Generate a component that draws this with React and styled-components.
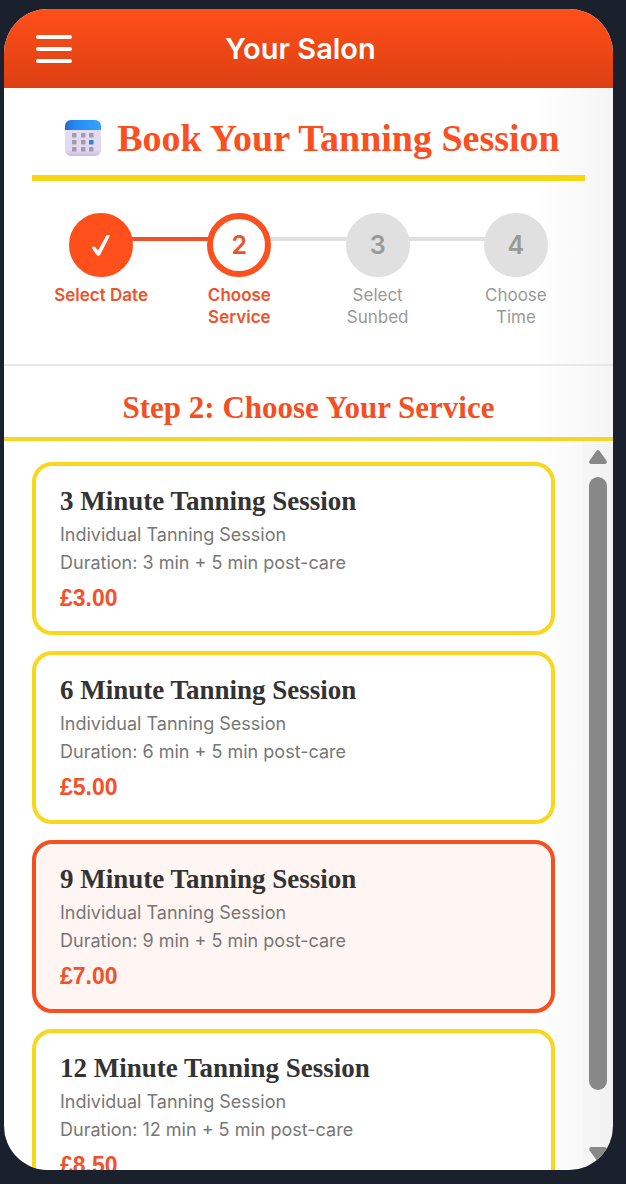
import React, { useState } from 'react'
import styled, { createGlobalStyle } from 'styled-components'

const GlobalStyle = createGlobalStyle`
    * {
        box-sizing: border-box;
    }
    body {
        margin: 0;
        background-color: #1a202c;
        font-family: Inter, 'Liberation Sans', sans-serif;
    }
    h1, h2, h3, p, ol {
        margin: 0;
        padding: 0;
    }
`

const Screen = styled.div`
    height: 100vh;
    padding: 9px 13px 14px 4px;
`

const Phone = styled.div`
    display: flex;
    flex-direction: column;
    height: 100%;
    overflow: hidden;
    border-radius: 44px;
    background: linear-gradient(to right, #ffffff 87%, #f5f5f5);
`

const Header = styled.header`
    display: flex;
    align-items: center;
    flex-shrink: 0;
    height: 79px;
    padding: 0 84px 0 32px;
    background: linear-gradient(#ff4f1a, #dd4012);
`

const MenuButton = styled.button`
    display: flex;
    flex-direction: column;
    gap: 8px;
    width: 36px;
    padding: 0;
    border: 0;
    background: none;
    cursor: pointer;
    > span {
        height: 4px;
        border-radius: 2px;
        background-color: #ffffff;
    }
`

const SalonName = styled.p`
    flex: 1;
    color: #ffffff;
    font-size: 29px;
    font-weight: 600;
    line-height: 36px;
    text-align: center;
`

const Booking = styled.section`
    flex-shrink: 0;
    padding: 28px 28px 36px;
    border-bottom: 2px solid #e8e8e8;
`

const TitleRow = styled.div`
    display: flex;
    align-items: center;
    justify-content: center;
    gap: 16px;
    padding: 0 0 15px 8px;
    border-bottom: 6px solid #fbd512;
    > svg {
        flex-shrink: 0;
    }
`

const Title = styled.h1`
    color: #fa4f1f;
    font-family: 'Liberation Serif', serif;
    font-size: 38px;
    font-weight: 700;
    line-height: 44px;
    white-space: nowrap;
`

const Steps = styled.ol`
    display: grid;
    grid-template-columns: repeat(4, 1fr);
    padding-top: 32px;
    list-style: none;
`

const Step = styled.li`
    position: relative;
    display: flex;
    flex-direction: column;
    align-items: center;
    gap: 7px;
    &:not(:last-child)::after {
        content: '';
        position: absolute;
        top: 24px;
        left: 50%;
        width: 100%;
        height: 4px;
        background-color: ${props => (props.$state === 'done' ? '#f0502a' : '#e0e0e0')};
    }
`

const circleColors = {
    done: { back: '#ff4f1a', edge: '#ff4f1a', text: '#ffffff' },
    current: { back: '#ffffff', edge: '#fc501f', text: '#ee5227' },
    next: { back: '#e0e0e0', edge: '#e0e0e0', text: '#999999' },
}

const Circle = styled.span`
    position: relative;
    z-index: 1;
    display: flex;
    align-items: center;
    justify-content: center;
    width: 64px;
    height: 64px;
    border: 6px solid ${props => circleColors[props.$state].edge};
    border-radius: 50%;
    background-color: ${props => circleColors[props.$state].back};
    color: ${props => circleColors[props.$state].text};
    font-size: 25px;
    font-weight: 600;
`

const StepLabel = styled.span`
    max-width: 100px;
    color: ${props => (props.$state === 'next' ? '#999999' : '#f0522a')};
    font-size: 17px;
    font-weight: ${props => (props.$state === 'next' ? 400 : 600)};
    line-height: 22px;
    text-align: center;
`

const StepHeading = styled.h2`
    flex-shrink: 0;
    padding: 24px 28px 11px;
    border-bottom: 4px solid #f6d524;
    color: #f44f22;
    font-family: 'Liberation Serif', serif;
    font-size: 31px;
    font-weight: 700;
    line-height: 36px;
    text-align: center;
`

const ListArea = styled.div`
    display: flex;
    flex: 1;
    min-height: 0;
`

const ServiceList = styled.div`
    display: flex;
    flex: 1;
    flex-direction: column;
    gap: 16px;
    padding: 21px 28px;
    overflow-y: auto;
    scrollbar-width: none;
`

const ServiceCard = styled.button`
    flex-shrink: 0;
    padding: 20px 24px 19px;
    border: 4px solid ${props => (props.$selected ? '#f6501f' : '#f9d71c')};
    border-radius: 20px;
    background-color: ${props => (props.$selected ? '#fff5f2' : '#ffffff')};
    font-family: inherit;
    text-align: left;
    cursor: pointer;
`

const ServiceName = styled.h3`
    padding-bottom: 5px;
    color: #333333;
    font-family: 'Liberation Serif', serif;
    font-size: 27px;
    font-weight: 700;
    line-height: 30px;
`

const ServiceText = styled.p`
    color: #777777;
    font-size: 18px;
    line-height: 28px;
`

const Price = styled.p`
    padding-top: 7px;
    color: #f4502a;
    font-family: 'Liberation Sans', sans-serif;
    font-size: 23px;
    font-weight: 700;
    line-height: 28px;
`

const ScrollTrack = styled.div`
    display: flex;
    flex-direction: column;
    align-items: center;
    width: 30px;
    padding-top: 9px;
    background-color: rgba(0, 0, 0, .01);
`

const ScrollThumb = styled.div`
    flex: 1;
    width: 18px;
    margin: 13px 0 57px;
    border-radius: 9px;
    background-color: #888888;
`

const steps = [
    { label: 'Select Date', state: 'done' },
    { label: 'Choose Service', state: 'current' },
    { label: 'Select Sunbed', state: 'next' },
    { label: 'Choose Time', state: 'next' },
]

const services = [
    { minutes: 3, price: '£3.00' },
    { minutes: 6, price: '£5.00' },
    { minutes: 9, price: '£7.00' },
    { minutes: 12, price: '£8.50' },
]

function CalendarIcon() {
    return (
        <svg width="36" height="36" viewBox="0 0 36 36" aria-hidden="true">
            <defs>
                <linearGradient id="calTop" x1="0" x2="1" y1="0" y2="0">
                    <stop offset="0" stopColor="#2468d4" />
                    <stop offset=".25" stopColor="#2488f2" />
                    <stop offset="1" stopColor="#35a2ff" />
                </linearGradient>
                <linearGradient id="calPage" x1="0" x2="0" y1="0" y2="1">
                    <stop offset="0" stopColor="#e6def3" />
                    <stop offset=".85" stopColor="#e2d8ef" />
                    <stop offset="1" stopColor="#cbb9dd" />
                </linearGradient>
            </defs>
            <rect width="36" height="36" rx="6" fill="url(#calPage)" />
            <path d="M0 10V6a6 6 0 0 1 6-6h24a6 6 0 0 1 6 6v4z" fill="url(#calTop)" />
            {[13, 20, 27].map(y => [7, 16, 24].map(x => (
                <rect
                    key={`${x}-${y}`}
                    x={x}
                    y={y}
                    width="4.5"
                    height="4.5"
                    rx=".5"
                    fill={x === 24 && y === 20 ? '#2488d8' : '#a39bae'}
                />
            )))}
        </svg>
    )
}

function CheckIcon() {
    return (
        <svg width="20" height="22" viewBox="0 0 20 22" fill="#ffffff" role="img" aria-label="Done">
            <path d="M.8 13.8C1.4 12.2 3.6 12 4.6 13.4L7 16.6 14.8 2.4C15.8.8 17.6.7 19 1.4L9.4 20.4C8.6 22 6 22 5.2 20.6z" />
        </svg>
    )
}

function App() {
    const [selected, setSelected] = useState(9)

    return (
        <Screen>
            <GlobalStyle />
            <Phone>
                <Header>
                    <MenuButton aria-label="Menu">
                        <span />
                        <span />
                        <span />
                    </MenuButton>
                    <SalonName>Your Salon</SalonName>
                </Header>
                <Booking>
                    <TitleRow>
                        <CalendarIcon />
                        <Title>Book Your Tanning Session</Title>
                    </TitleRow>
                    <Steps>
                        {steps.map((step, index) => (
                            <Step key={step.label} $state={step.state}>
                                <Circle $state={step.state}>
                                    {step.state === 'done' ? <CheckIcon /> : index + 1}
                                </Circle>
                                <StepLabel $state={step.state}>{step.label}</StepLabel>
                            </Step>
                        ))}
                    </Steps>
                </Booking>
                <StepHeading>Step 2: Choose Your Service</StepHeading>
                <ListArea>
                    <ServiceList>
                        {services.map(({ minutes, price }) => (
                            <ServiceCard
                                key={minutes}
                                $selected={selected === minutes}
                                aria-pressed={selected === minutes}
                                onClick={() => setSelected(minutes)}
                            >
                                <ServiceName>{minutes} Minute Tanning Session</ServiceName>
                                <ServiceText>Individual Tanning Session</ServiceText>
                                <ServiceText>Duration: {minutes} min + 5 min post-care</ServiceText>
                                <Price>{price}</Price>
                            </ServiceCard>
                        ))}
                    </ServiceList>
                    <ScrollTrack aria-hidden="true">
                        <svg width="18" height="14" viewBox="0 0 18 14" fill="#888888">
                            <path d="M7.4 1Q9-.8 10.6 1L17.4 10.5Q18.6 13.5 16 14H2Q-.6 13.5.6 10.5z" />
                        </svg>
                        <ScrollThumb />
                        <svg width="18" height="23" viewBox="0 0 18 23" fill="#888888">
                            <path d="M7.4 13Q9 14.8 10.6 13L17.4 3.5Q18.6.5 16 0H2Q-.6.5.6 3.5z" />
                        </svg>
                    </ScrollTrack>
                </ListArea>
            </Phone>
        </Screen>
    )
}

export default App
